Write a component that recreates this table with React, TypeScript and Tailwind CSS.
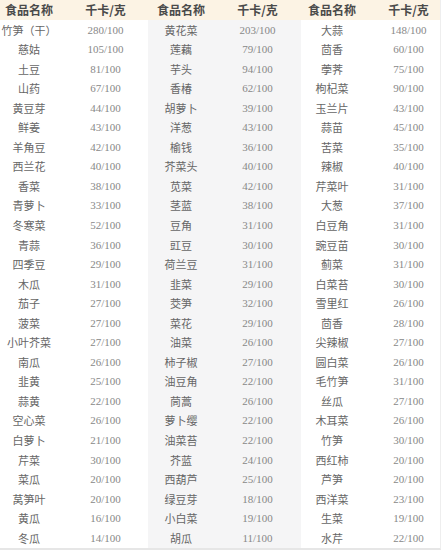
import React from "react";

const rows: [string, string, string, string, string, string][] = [
  ["竹笋（干）", "280/100", "黄花菜", "203/100", "大蒜", "148/100"],
  ["慈姑", "105/100", "莲藕", "79/100", "茴香", "60/100"],
  ["土豆", "81/100", "芋头", "94/100", "荸荠", "75/100"],
  ["山药", "67/100", "香椿", "62/100", "枸杞菜", "90/100"],
  ["黄豆芽", "44/100", "胡萝卜", "39/100", "玉兰片", "43/100"],
  ["鲜姜", "43/100", "洋葱", "43/100", "蒜苗", "45/100"],
  ["羊角豆", "42/100", "榆钱", "36/100", "苦菜", "35/100"],
  ["西兰花", "40/100", "芥菜头", "40/100", "辣椒", "40/100"],
  ["香菜", "38/100", "苋菜", "42/100", "芹菜叶", "31/100"],
  ["青萝卜", "33/100", "茎蓝", "38/100", "大葱", "37/100"],
  ["冬寒菜", "52/100", "豆角", "31/100", "白豆角", "31/100"],
  ["青蒜", "36/100", "豇豆", "30/100", "豌豆苗", "30/100"],
  ["四季豆", "29/100", "荷兰豆", "31/100", "蓟菜", "31/100"],
  ["木瓜", "31/100", "韭菜", "29/100", "白菜苔", "30/100"],
  ["茄子", "27/100", "茭笋", "32/100", "雪里红", "26/100"],
  ["菠菜", "27/100", "菜花", "29/100", "茴香", "28/100"],
  ["小叶芥菜", "27/100", "油菜", "26/100", "尖辣椒", "27/100"],
  ["南瓜", "26/100", "柿子椒", "27/100", "圆白菜", "26/100"],
  ["韭黄", "25/100", "油豆角", "22/100", "毛竹笋", "31/100"],
  ["蒜黄", "22/100", "茼蒿", "26/100", "丝瓜", "27/100"],
  ["空心菜", "26/100", "萝卜缨", "22/100", "木耳菜", "26/100"],
  ["白萝卜", "21/100", "油菜苔", "22/100", "竹笋", "30/100"],
  ["芹菜", "30/100", "芥蓝", "24/100", "西红柿", "20/100"],
  ["菜瓜", "20/100", "西葫芦", "25/100", "芦笋", "20/100"],
  ["莴笋叶", "20/100", "绿豆芽", "18/100", "西洋菜", "23/100"],
  ["黄瓜", "16/100", "小白菜", "19/100", "生菜", "19/100"],
  ["冬瓜", "14/100", "胡瓜", "11/100", "水芹", "22/100"],
];

const nameFont = { fontFamily: '"Noto Sans CJK SC", sans-serif' };
const numFont = { fontFamily: '"Liberation Serif", "Noto Sans CJK SC", serif' };

function Group({ idx, gray }: { idx: number; gray: boolean }) {
  const widths =
    idx === 0
      ? ["w-[58px]", "w-[90px] pl-[5px]"]
      : idx === 1
      ? ["w-[66px]", "w-[87px]"]
      : ["w-[62px]", "w-[77px] pl-[14px]"];
  return (
    <div className={`flex flex-col ${gray ? "bg-[#f5f5f6]" : "bg-white"}`}>
      <div className="flex h-[20px] items-center bg-[#fcf3e4] text-[12px] font-bold text-[#4a4a4a]" style={nameFont}>
        <div className={`${widths[0]} text-center`}>食品名称</div>
        <div className={`${widths[1]} text-center`}>千卡/克</div>
      </div>
      {rows.map((r, i) => (
        <div key={i} className="flex h-[19.55px] items-center">
          <div className={`${widths[0]} text-center text-[11px] text-[#666] whitespace-nowrap`} style={nameFont}>
            {r[idx * 2]}
          </div>
          <div className={`${widths[1]} text-center text-[11px] text-[#888]`} style={numFont}>
            {r[idx * 2 + 1]}
          </div>
        </div>
      ))}
    </div>
  );
}

export default function App() {
  return (
    <div className="w-[442px] h-[550px] overflow-hidden bg-white">
      <div className="flex w-[441px] border-r border-[#eeeeee] border-b-2 border-b-[#e6e6e6] h-[550px]">
        <Group idx={0} gray={false} />
        <Group idx={1} gray={true} />
        <Group idx={2} gray={false} />
      </div>
    </div>
  );
}
